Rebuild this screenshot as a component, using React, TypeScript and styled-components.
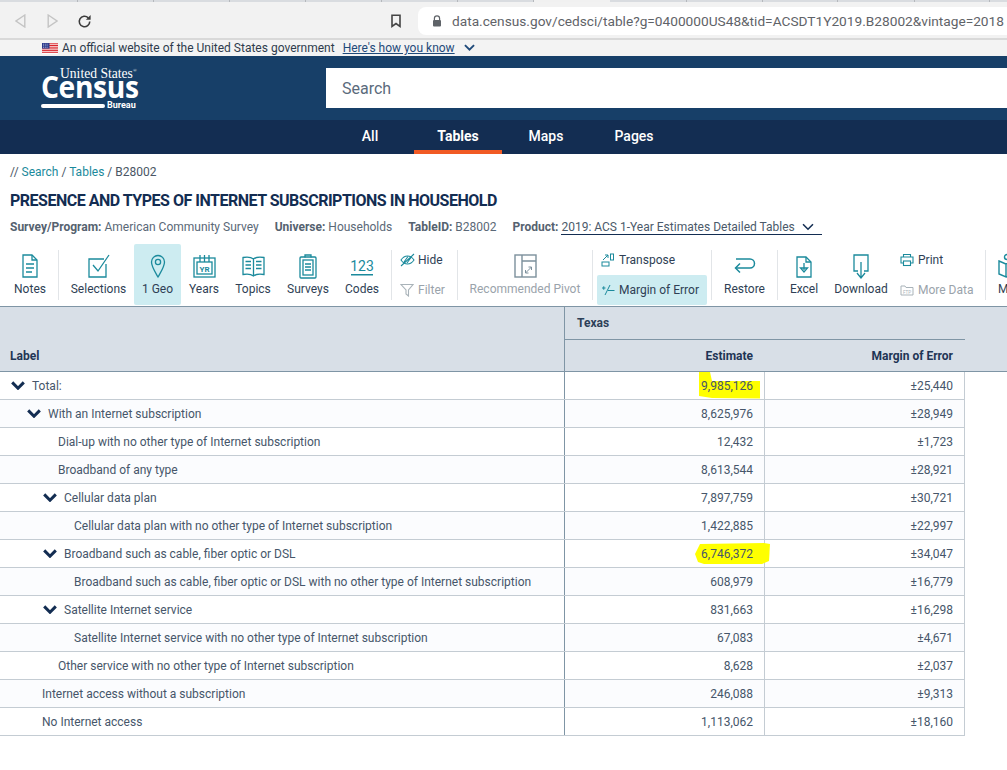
import React from 'react';
import styled, { createGlobalStyle } from 'styled-components';

const Global = createGlobalStyle`
  html, body { margin: 0; padding: 0; background: #fff; overflow: hidden; }
  body { font-family: Roboto, "Liberation Sans", sans-serif; width: 1007px; height: 770px; }
  * { box-sizing: border-box; }
`;

const TEAL = '#1b8a9c';

const Page = styled.div`width: 1007px; height: 770px; overflow: hidden; display: flex; flex-direction: column;`;
const TabStrip = styled.div`height: 2px; display: flex; background: #d9dce0;`;
const Tab = styled.div<{ $active?: boolean; $w: number }>`
  width: ${p => p.$w}px; flex: none; height: 2px;
  background: ${p => (p.$active ? '#f1f1f1' : '#d9dce0')};
  border-right: 1px solid ${p => (p.$active ? '#f1f1f1' : '#b5b8bc')};
`;
const BrowserBar = styled.div`
  height: 38px; background: #f2f2f2; border-bottom: 2px solid #d9d9d9;
  display: flex; align-items: flex-start; padding: 5px 0 0 15px;
`;
const NavIcons = styled.div`display: flex; align-items: center; width: 375px; height: 28px;`;
const NavSpace = styled.span<{ $w: number }>`width: ${p => p.$w}px; flex: none;`;
const AddressWrap = styled.div`display: flex; align-items: center; height: 28px; flex: 1; min-width: 0;`;
const Bookmark = styled.div`width: 28px; display: flex; flex: none;`;
const Address = styled.div`
  flex: 1; min-width: 0; height: 28px; background: #fff; border-radius: 8px 0 0 8px;
  display: flex; align-items: center; padding-left: 14px; gap: 10px; overflow: hidden;
  svg { flex: none; }
`;
const Url = styled.span`font: 13.7px Roboto, sans-serif; color: #5f6368; white-space: nowrap;`;

const GovBanner = styled.div`
  height: 16px; background: #f3f3f3; display: flex; align-items: center; padding-left: 42px;
  font-size: 12px; color: #2f3c4d; white-space: nowrap;
  svg { flex: none; }
`;
const BannerText = styled.span`margin: 0 8px 0 4px;`;
const BannerLink = styled.span`color: #1f4a7a; text-decoration: underline; margin-right: 9px;`;

const Header = styled.div`height: 64px; background: #173f68; display: flex; padding: 12px 0 12px 41px;`;
const Logo = styled.div`width: 285px; color: #fff; display: flex; flex-direction: column;`;
const LogoTop = styled.span`font: 13.6px/11px "Liberation Serif", serif; margin-left: 19px; white-space: nowrap;`;
const LogoReg = styled.sup`font-size: 5px; line-height: 0;`;
const LogoMark = styled.span`
  font: 700 31px/22px "Open Sans", sans-serif; letter-spacing: -0.4px; margin-top: -4px; display: block;
  transform-origin: left center; transform: scaleX(0.91);
  white-space: nowrap;
`;
const LogoBottom = styled.div`display: flex; align-items: center; gap: 2px; margin-top: 4px;`;
const LogoBar = styled.span`width: 64px; height: 4px; background: #fff; border-radius: 2px;`;
const LogoBureau = styled.span`font: 700 9px/9px Roboto, sans-serif;`;
const SearchBox = styled.div`
  flex: 1; background: #fff; height: 40px; display: flex; align-items: center; padding-left: 16px;
  font-size: 16px; color: #5b6b7c;
`;

const NavBar = styled.div`height: 34px; background: #132d52; display: flex; padding-left: 326px;`;
const NavTab = styled.div<{ $active?: boolean }>`
  width: 88px; height: 34px; display: flex; align-items: center; justify-content: center; color: #fff;
  font-size: 14px; font-weight: ${p => (p.$active ? 700 : 500)};
  border-bottom: 4px solid ${p => (p.$active ? '#f15a24' : 'transparent')}; padding-top: 2px;
`;

const Crumbs = styled.div`font-size: 12px; line-height: 14px; color: #4a5665; padding: 11px 0 0 10px; height: 25px;`;
const CrumbLink = styled.span`color: ${TEAL};`;
const Title = styled.h1`
  margin: 12px 0 0 10px; font-size: 16px; line-height: 20px; font-weight: 700; color: #132d52;
  letter-spacing: -0.49px; white-space: nowrap;
`;
const Meta = styled.div`display: flex; gap: 16px; padding: 9px 0 0 10px; font-size: 12px; line-height: 14px; color: #5a6877; height: 23px; white-space: nowrap;`;
const MetaKey = styled.b`font-weight: 700; color: #55626f;`;
const ProductSelect = styled.span`
  display: inline-flex; align-items: center; gap: 7px; width: 261px; height: 15px; margin-left: 3px;
  border-bottom: 1px solid #132d52; color: #4b5a6a; vertical-align: top;
`;

const Toolbar = styled.div`display: flex; height: 61px; margin-top: 10px; align-items: stretch; white-space: nowrap; overflow: hidden; flex: none;`;
const Divider = styled.div<{ $ml?: number }>`width: 1px; flex: none; background: #e2e5e8; margin: 6px 0 5px ${p => p.$ml ?? 0}px;`;
const Tool = styled.div<{ $w: number; $on?: boolean; $off?: boolean; $pl?: number; $start?: boolean }>`
  width: ${p => p.$w}px; flex: none; display: flex; flex-direction: column;
  align-items: ${p => (p.$start ? 'flex-start' : 'center')};
  font-size: 12px; line-height: 14px; color: ${p => (p.$off ? '#9aa3ab' : '#2f3f55')};
  background: ${p => (p.$on ? '#cdecf1' : 'transparent')};
  border-radius: ${p => (p.$on ? '2px' : '0')};
  padding: 9px 0 0 ${p => p.$pl ?? 0}px; gap: 3px;
  svg { height: 26px; flex: none; display: block; }
`;
const ToolCol = styled.div<{ $w: number; $pl: number }>`
  width: ${p => p.$w}px; flex: none; display: flex; flex-direction: column; padding: 1px 0 0 ${p => p.$pl}px;
`;
const MiniTool = styled.div<{ $on?: boolean; $off?: boolean; $w?: number; $pl?: number; $gap?: number }>`
  height: 30px; display: flex; align-items: center; gap: ${p => p.$gap ?? 4}px; font-size: 12px;
  width: ${p => (p.$w ? `${p.$w}px` : 'auto')};
  color: ${p => (p.$off ? '#9aa3ab' : '#2f3f55')};
  background: ${p => (p.$on ? '#cdecf1' : 'transparent')};
  border-radius: 2px; padding-left: ${p => p.$pl ?? 0}px;
  svg { flex: none; }
`;

const Table = styled.div`border-top: 1px solid #7f95a5; margin-top: 1px;`;
const HeadRow1 = styled.div`height: 33px; background: #d8dfe7; display: flex;`;
const HeadRow2 = styled.div`height: 32px; background: #d8dfe7; display: flex; border-bottom: 1px solid #7f95a5;`;
const HeadLabel = styled.div`
  width: 564px; flex: none; font-size: 12px; font-weight: 700; color: #1f3555; padding-left: 10px; display: flex; align-items: center;
`;
const HeadBlank = styled.div`width: 564px; flex: none;`;
const HeadGeo = styled.div`
  width: 401px; flex: none; font-size: 12px; font-weight: 700; color: #2d4058;
  border-left: 1px solid #7f95a5; border-bottom: 1px solid #7f95a5; padding: 9px 0 0 12px;
`;
const HeadNum = styled.div<{ $w: number; $first?: boolean }>`
  width: ${p => p.$w}px; flex: none; font-size: 12px; font-weight: 700; color: #1f3555; text-align: right;
  padding-right: ${p => (p.$first ? 11 : 12)}px; display: flex; align-items: center; justify-content: flex-end;
  border-left: ${p => (p.$first ? '1px solid #7f95a5' : '0')};
`;
const Row = styled.div<{ $alt?: boolean }>`
  width: 965px; height: 28px; display: flex; font-size: 12px; color: #46566a;
  background: ${p => (p.$alt ? '#fbfcfe' : '#fff')}; border-bottom: 1px solid #c4ccd3;
`;
const LabelCell = styled.div<{ $indent: number }>`
  width: 564px; flex: none; display: flex; align-items: center; gap: 7px; padding-left: ${p => p.$indent}px;
  white-space: nowrap;
`;
const NumCell = styled.div<{ $w: number; $dark?: boolean }>`
  width: ${p => p.$w}px; flex: none; position: relative; display: flex; align-items: center; justify-content: flex-end;
  padding-right: 11px; border-left: 1px solid ${p => (p.$dark ? '#7f95a5' : '#c4ccd3')};
  border-right: ${p => (p.$dark ? '0' : '1px solid #c4ccd3')};
`;
const MarkerFirst = styled.svg`position: absolute; right: 2px; top: -1px; width: 66px; height: 28px; z-index: 1;`;
const MarkerSecond = styled.svg`position: absolute; right: -8px; top: 2px; width: 78px; height: 24px; z-index: 1;`;
const NumText = styled.span`position: relative; z-index: 2;`;
const ChevronSvg = styled.svg`flex: none;`;

const Chevron = ({ size = 14, color = '#132d52', w = 3 }: { size?: number; color?: string; w?: number }) => (
  <ChevronSvg width={size} height={size * 0.66} viewBox="0 0 14 9.2" fill="none">
    <path d="M1.2 1.4 L7 7.2 L12.8 1.4" stroke={color} strokeWidth={w} />
  </ChevronSvg>
);

const S = { fill: 'none', stroke: TEAL, strokeWidth: 1.3 } as const;

const rows: [string, number, boolean, string, string][] = [
  ['Total:', 11, true, '9,985,126', '±25,440'],
  ['With an Internet subscription', 27, true, '8,625,976', '±28,949'],
  ['Dial-up with no other type of Internet subscription', 58, false, '12,432', '±1,723'],
  ['Broadband of any type', 58, false, '8,613,544', '±28,921'],
  ['Cellular data plan', 43, true, '7,897,759', '±30,721'],
  ['Cellular data plan with no other type of Internet subscription', 74, false, '1,422,885', '±22,997'],
  ['Broadband such as cable, fiber optic or DSL', 43, true, '6,746,372', '±34,047'],
  ['Broadband such as cable, fiber optic or DSL with no other type of Internet subscription', 74, false, '608,979', '±16,779'],
  ['Satellite Internet service', 43, true, '831,663', '±16,298'],
  ['Satellite Internet service with no other type of Internet subscription', 74, false, '67,083', '±4,671'],
  ['Other service with no other type of Internet subscription', 58, false, '8,628', '±2,037'],
  ['Internet access without a subscription', 42, false, '246,088', '±9,313'],
  ['No Internet access', 42, false, '1,113,062', '±18,160'],
];

const tabs = [78, 76, 76, 76, 76, 76, 76, 76, 77, 76, 75, 77, 75];

export default function App() {
  return (
    <Page>
      <Global />
      <TabStrip>
        {tabs.map((w, i) => <Tab key={i} $w={w} $active={i === 7} />)}
      </TabStrip>
      <BrowserBar>
        <NavIcons>
          <svg width="11" height="14" viewBox="0 0 11 14" fill="none"><path d="M9.800 1 L1 7 L9.800 13 Z" stroke="#c4c4c4" strokeWidth="1.4" /></svg>
          <NavSpace $w={21} />
          <svg width="11" height="14" viewBox="0 0 11 14" fill="none"><path d="M1.200 1 L10 7 L1.200 13 Z" stroke="#c4c4c4" strokeWidth="1.4" /></svg>
          <NavSpace $w={19} />
          <svg width="15" height="15" viewBox="0 0 16 16" fill="none">
            <path d="M13.600 8a5.600 5.600 0 1 1-1.600-3.900" stroke="#3c3c3c" strokeWidth="1.7" />
            <path d="M14.500 1 V6 H9.500 Z" fill="#3c3c3c" />
          </svg>
        </NavIcons>
        <AddressWrap>
          <Bookmark>
            <svg width="12" height="14" viewBox="0 0 12 14" fill="none"><path d="M2 1.200 H10 V12.400 L6 9.600 L2 12.400 Z" stroke="#444" strokeWidth="1.600" /></svg>
          </Bookmark>
          <Address>
            <svg width="10" height="12" viewBox="0 0 10 12"><path d="M2.400 5V3.400a2.600 2.600 0 0 1 5.200 0V5" fill="none" stroke="#5f6368" strokeWidth="1.200" /><rect x="1" y="5" width="8" height="6.500" rx="1" fill="#5f6368" /></svg>
            <Url>data.census.gov/cedsci/table?g=0400000US48&amp;tid=ACSDT1Y2019.B28002&amp;vintage=2018</Url>
          </Address>
        </AddressWrap>
      </BrowserBar>
      <GovBanner>
        <svg width="16" height="11" viewBox="0 0 16 11">
          <rect width="16" height="11" fill="#fff" />
          <path d="M0 .8h16M0 2.500h16M0 4.200h16M0 5.900h16M0 7.600h16M0 9.300h16" stroke="#d8232a" strokeWidth="1" />
          <rect width="7.500" height="5.600" fill="#2b3a8c" />
          <path d="M1 1.200h5.500M1 2.800h5.500M1 4.400h5.500" stroke="#c9cfe8" strokeWidth=".7" strokeDasharray="1 .8" />
        </svg>
        <BannerText>An official website of the United States government</BannerText>
        <BannerLink>Here's how you know</BannerLink>
        <Chevron size={11} color="#1f4a7a" w={2.400} />
      </GovBanner>
      <Header>
        <Logo>
          <LogoTop>United States<LogoReg>®</LogoReg></LogoTop>
          <LogoMark>Census</LogoMark>
          <LogoBottom>
            <LogoBar />
            <LogoBureau>Bureau</LogoBureau>
          </LogoBottom>
        </Logo>
        <SearchBox>Search</SearchBox>
      </Header>
      <NavBar>
        <NavTab>All</NavTab>
        <NavTab $active>Tables</NavTab>
        <NavTab>Maps</NavTab>
        <NavTab>Pages</NavTab>
      </NavBar>
      <Crumbs>// <CrumbLink>Search</CrumbLink> / <CrumbLink>Tables</CrumbLink> / B28002</Crumbs>
      <Title>PRESENCE AND TYPES OF INTERNET SUBSCRIPTIONS IN HOUSEHOLD</Title>
      <Meta>
        <span><MetaKey>Survey/Program:</MetaKey> American Community Survey</span>
        <span><MetaKey>Universe:</MetaKey> Households</span>
        <span><MetaKey>TableID:</MetaKey> B28002</span>
        <span>
          <MetaKey>Product:</MetaKey>
          <ProductSelect>2019: ACS 1-Year Estimates Detailed Tables <Chevron size={12} w={1.800} /></ProductSelect>
        </span>
      </Meta>
      <Toolbar>
        <Tool $w={58} $pl={2}>
          <svg width="18" viewBox="0 0 18 26" {...S}><path d="M2 2h9l5 5v17H2z" /><path d="M11 2v5h5M5 11h8M5 15h8M5 19h6" /></svg>
          Notes
        </Tool>
        <Divider />
        <Tool $w={75} $pl={4}>
          <svg width="24" viewBox="0 0 24 26" {...S}><path d="M19 11v13H2V6h15" /><path d="M6 12l5 6L22 2" /></svg>
          Selections
        </Tool>
        <Tool $w={47} $on>
          <svg width="16" viewBox="0 0 16 26" {...S}><path d="M8 24C4 17 1.500 13.500 1.500 9a6.500 6.500 0 0 1 13 0C14.500 13.500 12 17 8 24z" /><circle cx="8" cy="9" r="2.600" /></svg>
          1 Geo
        </Tool>
        <Tool $w={46}>
          <svg width="23" viewBox="0 0 23 26" {...S}>
            <rect x="1" y="5" width="21" height="19" />
            <rect x="4" y="9" width="15" height="12" />
            <path d="M7 2v7M11.500 2v7M16 2v7" />
            <text x="11.500" y="19" fontSize="8" fontWeight="700" textAnchor="middle" fill={TEAL} stroke="none" fontFamily="Roboto, sans-serif">YR</text>
          </svg>
          Years
        </Tool>
        <Tool $w={52}>
          <svg width="23" viewBox="0 0 23 26" {...S}>
            <path d="M11.500 6C9 4 4 4 1 4.500v17c3-.5 8-.5 10.500 1.500 2.500-2 7.500-2 10.500-1.500v-17C19 4 14 4 11.500 6zM11.500 6v17" />
            <path d="M3.500 8.500h5.500M3.500 12h5.500M3.500 15.500h5.500M14 8.500h5.500M14 12h5.500M14 15.500h5.500" />
          </svg>
          Topics
        </Tool>
        <Tool $w={58}>
          <svg width="18" viewBox="0 0 18 26" {...S}>
            <rect x="1" y="4" width="16" height="21" rx="1" /><rect x="4" y="7" width="10" height="15" />
            <path d="M6 4.500V2h6v2.500M6 11h6M6 14h6M6 17h6" />
          </svg>
          Surveys
        </Tool>
        <Tool $w={50}>
          <svg width="24" viewBox="0 0 24 26">
            <text x="12" y="18" fontSize="14" textAnchor="middle" fill={TEAL} fontFamily="Roboto, sans-serif">123</text>
            <rect x="1" y="21" width="22" height="1.500" fill={TEAL} />
          </svg>
          Codes
        </Tool>
        <Divider $ml={4} />
        <ToolCol $w={65} $pl={8}>
          <MiniTool $gap={3}>
            <svg width="15" height="14" viewBox="0 0 15 14" {...S} strokeWidth={1.100}><path d="M1 7c2-3 4-4 6.500-4S12 4 14 7c-2 3-4 4-6.500 4S3 10 1 7z" /><path d="M4 9L8 3.500M7 10l4-5.500M1 13L14 1" /></svg>
            Hide
          </MiniTool>
          <MiniTool $off $gap={4}>
            <svg width="14" height="14" viewBox="0 0 14 14" fill="none" stroke="#a9b3b9" strokeWidth="1.100"><path d="M1 1.500h12L8.500 7v6L6 11V7z" /></svg>
            Filter
          </MiniTool>
        </ToolCol>
        <Divider />
        <Tool $w={134} $off>
          <svg width="23" viewBox="0 0 23 26" fill="none" stroke="#7c909c" strokeWidth="1.400">
            <rect x="1" y="2" width="21" height="22" />
            <path d="M8 2v22M8 8h14" />
            <path d="M11.500 20l6-6M14.500 14h3v3M11.500 17v3h3" strokeWidth="1" />
          </svg>
          Recommended Pivot
        </Tool>
        <Divider />
        <ToolCol $w={118} $pl={4}>
          <MiniTool $pl={4} $w={110}>
            <svg width="14" height="14" viewBox="0 0 14 14" {...S} strokeWidth={1}><rect x="1" y="9" width="7" height="4" /><rect x="9.500" y="1" width="3" height="6" /><path d="M2 7l5-5M4 2h3v3" /></svg>
            Transpose
          </MiniTool>
          <MiniTool $on $pl={4} $w={110}>
            <svg width="14" height="14" viewBox="0 0 14 14" {...S} strokeWidth={1}><path d="M1 5h3.500M2.750 3.250v3.500M9 2L4 12M7 7.500h6.500" /></svg>
            Margin of Error
          </MiniTool>
        </ToolCol>
        <Divider />
        <Tool $w={65}>
          <svg width="24" viewBox="0 0 24 26" {...S} strokeWidth={1.500}><path d="M3 6h14a4.500 4.500 0 0 1 0 9H3" /><path d="M7 10.500L2.500 15 7 19.500" /></svg>
          Restore
        </Tool>
        <Divider />
        <Tool $w={52}>
          <svg width="16" viewBox="0 0 16 26" {...S}><path d="M1 4h9l5 5v15H1z" /><path d="M10 4v5h5M8 10v7M4.500 15h7l-3.500 4z" /></svg>
          Excel
        </Tool>
        <Tool $w={62}>
          <svg width="16" viewBox="0 0 16 26" {...S}><path d="M5 18H1V2h14v16h-4" /><path d="M8 9v16M4 20l4 5 4-5" /></svg>
          Download
        </Tool>
        <ToolCol $w={93} $pl={8}>
          <MiniTool>
            <svg width="14" height="14" viewBox="0 0 14 14" {...S} strokeWidth={1.100}><path d="M3.500 4V1.500h7V4M3.500 10H1V4h12v6h-2.500" /><rect x="3.500" y="8" width="7" height="4.500" /></svg>
            Print
          </MiniTool>
          <MiniTool $off>
            <svg width="14" height="12" viewBox="0 0 14 12" fill="none" stroke="#a9b3b9" strokeWidth="1"><path d="M1 2h4l1 1.500h7V11H1z" /><text x="7" y="9.500" fontSize="4.500" textAnchor="middle" fill="#a9b3b9" stroke="none" fontFamily="Roboto, sans-serif">FTP</text></svg>
            More Data
          </MiniTool>
        </ToolCol>
        <Divider />
        <Tool $w={32} $start $pl={12}>
          <svg width="20" viewBox="0 0 20 26" {...S} strokeWidth={1.400}><path d="M1 8l7 3v13l-7-3zM8 11l7-3v13l-7 3" /><circle cx="9" cy="4" r="2.500" /></svg>
          M
        </Tool>
      </Toolbar>
      <Table>
        <HeadRow1>
          <HeadBlank />
          <HeadGeo>Texas</HeadGeo>
        </HeadRow1>
        <HeadRow2>
          <HeadLabel>Label</HeadLabel>
          <HeadNum $w={200} $first>Estimate</HeadNum>
          <HeadNum $w={201}>Margin of Error</HeadNum>
        </HeadRow2>
        {rows.map(([label, indent, chev, est, moe], i) => (
          <Row key={label} $alt={i % 2 === 1}>
            <LabelCell $indent={indent}>
              {chev && <Chevron size={14} />}
              {label}
            </LabelCell>
            <NumCell $w={200} $dark>
              {i === 0 && (
                <MarkerFirst viewBox="0 0 66 28">
                  <path d="M3 1 L14 1 L16 10 L64 10 L64 27.500 L16 27 L3 25 Z" fill="#ffff00" />
                </MarkerFirst>
              )}
              {i === 6 && (
                <MarkerSecond viewBox="0 0 78 24">
                  <path d="M6 2 L70 1 L76 2 L75 19 L68 22 L10 22 L4 20 L1 12 Z" fill="#ffff00" />
                </MarkerSecond>
              )}
              <NumText>{est}</NumText>
            </NumCell>
            <NumCell $w={201}>{moe}</NumCell>
          </Row>
        ))}
      </Table>
    </Page>
  );
}
